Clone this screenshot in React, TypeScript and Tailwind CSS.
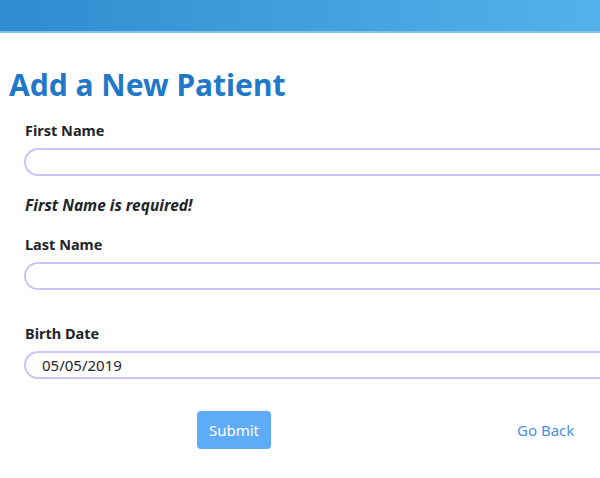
import React from "react";

export default function App() {
  return (
    <div className="w-[600px] h-[478px] overflow-hidden bg-white font-['Noto_Sans',sans-serif] text-[#212529]">
      <div className="h-[33px] bg-gradient-to-r from-[#2e8ccf] to-[#52b3ea] border-b-[2px] border-[#7cc4ee]" />
      <div className="pl-[9px] pt-[32px]">
        <h1 className="text-[30px] leading-[40px] font-bold text-[#1f78c8]">Add a New Patient</h1>
      </div>
      <form className="pl-[24px] pt-[15px] w-[640px]">
        <label className="block pl-[1px] text-[14.5px] font-bold leading-[20px]">First Name</label>
        <input className="mt-[8px] block w-[616px] h-[28px] rounded-full border-2 border-[#c6c6fb] outline-none px-4" />
        <p className="mt-[19px] pl-[1px] text-[15.5px] italic font-bold leading-[20px]">First Name is required!</p>
        <label className="mt-[19px] block pl-[1px] text-[14.5px] font-bold leading-[20px]">Last Name</label>
        <input className="mt-[8px] block w-[616px] h-[28px] rounded-full border-2 border-[#c6c6fb] outline-none px-4" />
        <label className="mt-[33px] block pl-[1px] text-[14.5px] font-bold leading-[20px]">Birth Date</label>
        <input
          defaultValue="05/05/2019"
          className="mt-[8px] block w-[616px] h-[28px] rounded-full border-2 border-[#c6c6fb] outline-none pl-[16px] text-[15px] text-[#212529]"
        />
        <div className="mt-[32px] flex items-center">
          <button type="button" className="ml-[173px] w-[74px] h-[38px] rounded-[4px] bg-[#5eacf8] text-white text-[15px]">
            Submit
          </button>
          <a className="ml-[246px] text-[15px] text-[#4a90e8]">Go Back</a>
        </div>
      </form>
    </div>
  );
}
